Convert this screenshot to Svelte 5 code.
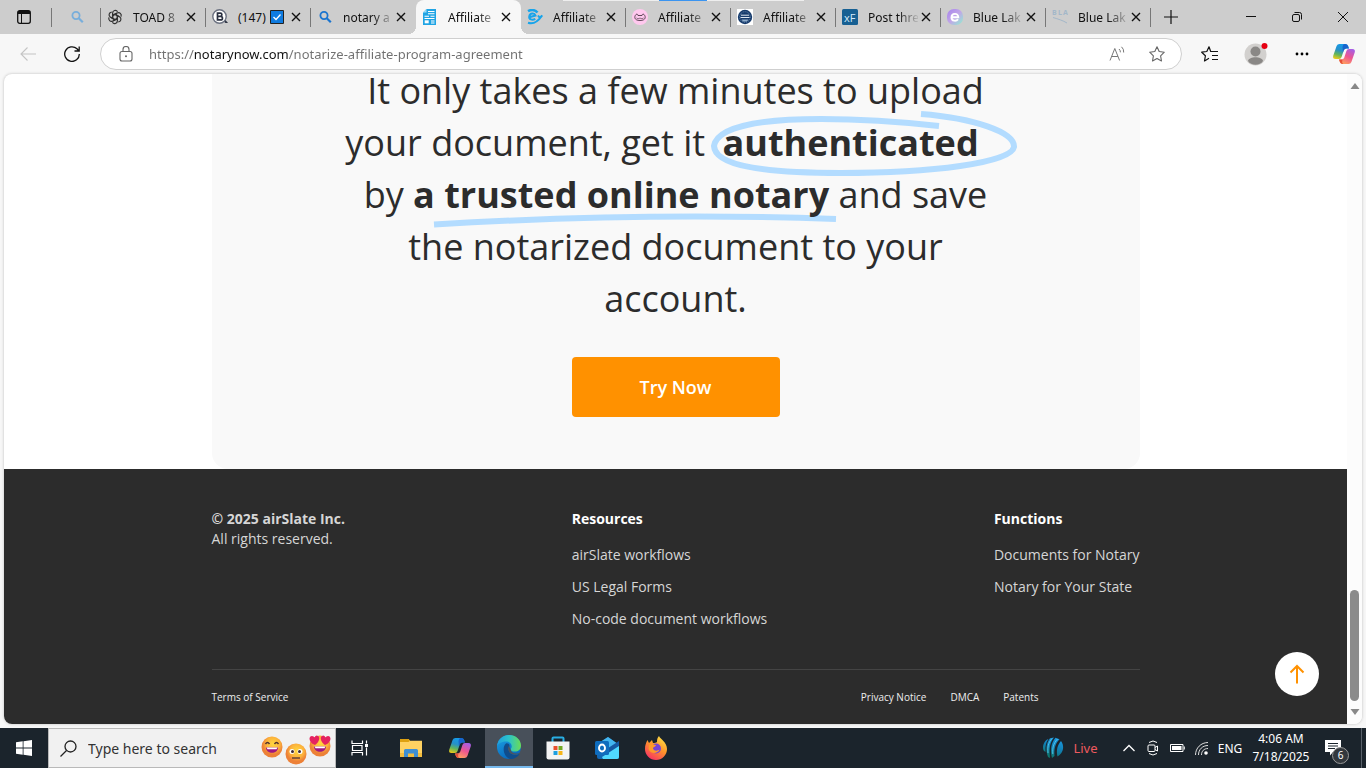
<script lang="ts">
    const tabs = [
        { icon: 'gpt', title: 'TOAD 8' },
        { icon: 'bq', title: '(147)', checked: true },
        { icon: 'search', title: 'notary a' },
        { icon: 'doc', title: 'Affiliate', active: true },
        { icon: 'swirl', title: 'Affiliate' },
        { icon: 'pink', title: 'Affiliate' },
        { icon: 'seal', title: 'Affiliate' },
        { icon: 'xf', title: 'Post thre' },
        { icon: 'e', title: 'Blue Lak' },
        { icon: 'bla', title: 'Blue Lak' },
    ]

    const resources = ['airSlate workflows', 'US Legal Forms', 'No-code document workflows']
    const functions = ['Documents for Notary', 'Notary for Your State']
    const legal = ['Privacy Notice', 'DMCA', 'Patents']

    let url = $state('https://notarynow.com/notarize-affiliate-program-agreement')
    let query = $state('')
</script>

{#snippet favicon(name: string)}
    <svg class="favicon" viewBox="0 0 16 16" width="16" height="16" aria-hidden="true">
        {#if name === 'gpt'}
            <g fill="none" stroke="#333" stroke-width="1.200">
                {#each [0, 60, 120, 180, 240, 300] as angle}
                    <path d="M5.600 9.400V4.200a2.700 2.700 0 0 1 5-1.500M5.600 6.600 8 5.200l4.300 2.500" transform="rotate({angle} 8 8)" />
                {/each}
            </g>
        {:else if name === 'bq'}
            <path d="m10.500 11.500 3 2.500H16l-2.500-3z" fill="#2f3545" />
            <circle cx="7.500" cy="7.500" r="6.700" fill="#fff" stroke="#6b7180" stroke-width="1.400" />
            <path d="M5.500 4.200h2.800a1.500 1.500 0 0 1 0 3.200H5.500zM5.500 7.400h3.200a1.700 1.700 0 0 1 0 3.500H5.500z" fill="none" stroke="#2a3040" stroke-width="1.700" />
        {:else if name === 'search' || name === 'search-pale'}
            <g fill="none" stroke={name === 'search' ? '#1a74cf' : '#78aedb'} stroke-width="1.800">
                <circle cx="7" cy="6.500" r="3.600" />
                <path d="m9.800 9.300 4 4" stroke-width="2.200" />
            </g>
        {:else if name === 'doc'}
            <path d="M4.500 0H14v16H1V3.500z" fill="#20a4e4" />
            <path d="M4.500 0v3.500H1z" fill="#9bdcf7" />
            <path d="M6 2.500h6.500M6 4.800h6.500M2.500 7.200h4.500M8.500 7.200h4M2.500 9.500h10M9 12h3.500M9 14h3.500" stroke="#fff" stroke-width="1.100" />
            <path d="M2.700 11.300h4v3h-4z" fill="#fff" />
        {:else if name === 'swirl'}
            <g fill="none" stroke="#18a4ea" stroke-width="2">
                <path d="M1 2.200C4 .4 8 .6 10.500 3.500" stroke-width="2.600" />
                <path d="M2.200 8.200 8.500 6.500C7.500 3.600 3 4 2.300 7.200c-.7 3.300 3 4.300 6 2.600" />
                <path d="M1 13.800C6 15.500 11 12.500 15 6.800M11 6.500l1.500 2 3-2" />
            </g>
        {:else if name === 'pink'}
            <circle cx="8" cy="8" r="8" fill="#ffc8ee" />
            <path d="M4 5.500c-2 2-2 6 4 6s6-4 4-6c-1.200-1-2 .2-2 1H6c0-.8-.800-2-2-1z" fill="none" stroke="#4f3948" stroke-width=".9" />
            <path d="M4.500 9c1 .8 2.500.8 3.500 0 1 .8 2.500.8 3.500 0" fill="none" stroke="#4f3948" stroke-width=".7" />
        {:else if name === 'seal'}
            <path d="M0 0h16v16H0z" fill="#fff" />
            <circle cx="8" cy="8" r="7.200" fill="#173b6b" />
            <circle cx="8" cy="8" r="5.300" fill="none" stroke="#6b8db4" stroke-dasharray="1 1" />
            <path d="M4 6.200h8M3.500 8.500h9" stroke="#dfe8f2" />
            <path d="M4.500 10.500h7l-1.500 2H6z" fill="#8eabc9" />
        {:else if name === 'xf'}
            <rect width="16" height="16" rx="1.500" fill="#176093" />
            <text x="2" y="12.500" font-family="Open Sans" font-size="11" fill="#d5eafa">xF</text>
        {:else if name === 'e'}
            <defs>
                <linearGradient id="e-fill" x1="0" y1="0" x2="1" y2="1">
                    <stop offset="0" stop-color="#a783ed" /><stop offset=".5" stop-color="#c1a6e8" /><stop offset="1" stop-color="#8ff0cf" />
                </linearGradient>
            </defs>
            <rect width="16" height="16" rx="7" fill="url(#e-fill)" />
            <path d="M4.800 8.200h6.500c0-4.700-6.800-4.300-6.800.2 0 4 5 4 6.500 1.800" fill="none" stroke="#fff" stroke-width="1.900" />
        {:else}
            <g font-family="Open Sans" font-size="7" font-weight="700" fill="#a3b7c9">
                <text x="0" y="6">B</text><text x="6" y="6">L</text><text x="11" y="6">A</text>
            </g>
            <path d="M1 8.500c5 1.500 10 3 14 5.500" fill="none" stroke="#a3b7c9" />
        {/if}
    </svg>
{/snippet}

{#snippet cross()}
    <svg viewBox="0 0 10 10" width="10" height="10" aria-hidden="true"><path d="m1 1 8 8M9 1 1 9" stroke="#111" stroke-width="1.400" /></svg>
{/snippet}

{#snippet copilot(id: string)}
    <svg viewBox="0 0 24 24" width="24" height="24" aria-hidden="true">
        <defs>
            <linearGradient id="{id}-a" x1=".5" y1="0" x2=".2" y2="1">
                <stop offset="0" stop-color="#159be9" /><stop offset=".4" stop-color="#2690c9" /><stop offset=".7" stop-color="#63b55a" /><stop offset="1" stop-color="#f0cb18" />
            </linearGradient>
            <linearGradient id="{id}-b" x1=".8" y1="0" x2=".3" y2="1">
                <stop offset="0" stop-color="#a45ee8" /><stop offset=".5" stop-color="#ed5590" /><stop offset="1" stop-color="#ffa15e" />
            </linearGradient>
        </defs>
        <path d="M17 6.500 16 3.700Q15.300 2 13.500 2H7.500Q5.300 2 4.600 4L1.300 13.500Q.3 17 3.600 17H7q2 0 2.600-2l2.200-6.700Q12.500 6.500 14.500 6.500z" fill="url(#{id}-a)" />
        <path d="M12.500 2h1q1.800 0 2.500 1.700l1 2.800h-2.500q-2 0-2.700 1.800L11 10.500 10.500 5Q10.800 2 12.500 2z" fill="#1753c6" opacity=".75" />
        <path d="m7 17.500 1 2.800Q8.700 22 10.500 22h6q2.200 0 2.900-2l3.300-9.500Q23.700 7 20.400 7H17q-2 0-2.600 2l-2.200 6.700q-.7 1.800-2.700 1.800z" fill="url(#{id}-b)" />
        <path d="m7 17.500 1 2.800Q8.700 22 10.500 22h1q-2-.5-1-4.500z" fill="#e54e37" />
    </svg>
{/snippet}

{#snippet face(kind: string)}
    <svg class="face {kind}" viewBox="0 0 22 22" width="22" height="22" aria-hidden="true">
        <defs>
            <radialGradient id="face-{kind}" cx=".55" cy=".35">
                <stop offset="0" stop-color="#ffd83f" /><stop offset=".65" stop-color="#fcb23c" /><stop offset="1" stop-color="#ed8137" />
            </radialGradient>
        </defs>
        <circle cx="11" cy="11" r="10.500" fill="url(#face-{kind})" />
        {#if kind === 'flat'}
            <circle cx="7" cy="8.500" r="2.500" fill="#fff" /><circle cx="15" cy="8.500" r="2.500" fill="#fff" />
            <circle cx="7.500" cy="8.500" r="1.500" fill="#402b38" /><circle cx="14.500" cy="8.500" r="1.500" fill="#402b38" />
            <path d="M7 15h8" stroke="#5b3a38" stroke-width="1.400" />
        {:else}
            <path d="M5 11.500h12c0 7-12 7-12 0z" fill="#a01780" />
            <path d="M5.500 11.500h11l-1 1.800h-9z" fill="#fff" />
            {#if kind === 'grin'}
                <path d="M4.500 8q2-3 4 0M13.500 8q2-3 4 0" fill="none" stroke="#50302e" stroke-width="1.400" />
            {:else}
                <path d="M6 10C-1 7-.5 1 3 1q2 0 2.500 1.500Q7-.5 9 1c3 2 0 7-3 9zM16 10c7-3 6.500-9 3-9q-2 0-2.500 1.500Q15-.5 13 1c-3 2 0 7 3 9z" fill="#e52260" />
            {/if}
        {/if}
    </svg>
{/snippet}

<div class="screen">
    <header class="tab-strip">
        <div class="loading-line"><span></span></div>
        <button class="tab-menu" aria-label="Tab actions menu">
            <svg viewBox="0 0 14 14" width="14" height="14"><rect x=".7" y=".7" width="12.600" height="12.600" rx="2" fill="none" stroke="#111" stroke-width="1.300" /><path d="M1 1h12v3H1z" fill="#111" /><path d="M4.500 4v9" stroke="#111" /></svg>
        </button>
        <button class="pinned" aria-label="Search">{@render favicon('search-pale')}</button>
        {#each tabs as tab}
            <div class="tab" class:active={tab.active}>
                {@render favicon(tab.icon)}
                <button class="title">
                    <span>{tab.title}</span>
                    {#if tab.checked}
                        <svg viewBox="0 0 14 14" width="14" height="14"><path d="M.5.5h13v13H.5z" fill="#0f7be0" stroke="#222" /><path d="m3.500 7 2.500 2.500 4.500-5" fill="none" stroke="#fff" stroke-width="1.300" /></svg>
                    {/if}
                </button>
                <button class="close" aria-label="Close tab">{@render cross()}</button>
            </div>
        {/each}
        <button class="new-tab" aria-label="New tab">
            <svg viewBox="0 0 14 14" width="14" height="14"><path d="M7 0v14M0 7h14" stroke="#111" stroke-width="1.200" /></svg>
        </button>
        <div class="window-controls">
            <button aria-label="Minimize"><svg viewBox="0 0 10 10" width="10" height="10"><path d="M0 4.500h10" stroke="#111" /></svg></button>
            <button aria-label="Restore"><svg viewBox="0 0 10 10" width="10" height="10"><g fill="none" stroke="#111"><rect x=".5" y="2.500" width="7" height="7" rx="1.500" /><path d="M2.500.5h5a2 2 0 0 1 2 2v5" /></g></svg></button>
            <button aria-label="Close window"><svg viewBox="0 0 10 10" width="10" height="10"><path d="m0 0 10 10M10 0 0 10" stroke="#111" /></svg></button>
        </div>
    </header>

    <div class="toolbar">
        <button class="back" aria-label="Back" disabled>
            <svg viewBox="0 0 16 14" width="16" height="14"><path d="M16 7H1M7.500.5 1 7l6.500 6.500" fill="none" stroke="#c4c4c4" stroke-width="1.100" /></svg>
        </button>
        <button class="reload" aria-label="Refresh">
            <svg viewBox="0 0 16 16" width="16" height="16"><path d="M15.300 8A7.300 7.300 0 1 1 13 2.800L15 5M15.200.5V5h-4.700" fill="none" stroke="#111" stroke-width="1.300" /></svg>
        </button>
        <div class="address">
            <svg class="lock" viewBox="0 0 14 16" width="14" height="16" aria-hidden="true"><g fill="none" stroke="#666" stroke-width="1.100"><rect x="1" y="5.500" width="12" height="9.500" rx="2" /><path d="M4 5.500V3.500a3 3 0 0 1 6 0v2" /></g><circle cx="7" cy="10.200" r="1" fill="#666" /></svg>
            <input type="text" bind:value={url} aria-label="Address" spellcheck="false" />
            <button aria-label="Read aloud">
                <svg viewBox="0 0 16 16" width="16" height="16"><path d="M1 14.500 5.800 2.500l4.800 12M2.700 10.500h6.200M10 3q1.500 1.300 1.400 3.300M12.500.8q2.500 2.200 2.200 5.700" fill="none" stroke="#777" /></svg>
            </button>
            <button aria-label="Add to favorites">
                <svg viewBox="0 0 16 16" width="16" height="16"><path d="m8 .8 2.200 4.700 5.100.7-3.700 3.600.9 5.200L8 12.500 3.500 15l.9-5.200L.7 6.200l5.100-.7z" fill="none" stroke="#666" stroke-width="1.100" stroke-linejoin="round" /></svg>
            </button>
        </div>
        <div class="actions">
            <button aria-label="Favorites">
                <svg viewBox="0 0 18 16" width="18" height="16"><path d="M11 5.500H9.700L8 .8 5.800 5.500l-5.100.7 3.700 3.600-.9 5.200L8 12.300M11 5.500h6M11 9.500h6M11 13.500h6" fill="none" stroke="#111" stroke-width="1.200" stroke-linejoin="round" /></svg>
            </button>
            <button aria-label="Profile">
                <svg viewBox="0 0 24 24" width="24" height="24"><circle cx="11.500" cy="12.500" r="11" fill="#d2d0ce" /><circle cx="11.500" cy="9.500" r="5" fill="#8a8886" /><path d="M4 19c1-5 14-5 15 0-3 5-12 5-15 0z" fill="#8a8886" /><circle cx="20.500" cy="4" r="3" fill="#e60012" /></svg>
            </button>
            <button aria-label="Settings and more">
                <svg viewBox="0 0 14 4" width="14" height="4"><circle cx="2" cy="2" r="1.400" /><circle cx="7" cy="2" r="1.400" /><circle cx="12" cy="2" r="1.400" /></svg>
            </button>
            <button aria-label="Copilot">{@render copilot('bar')}</button>
        </div>
    </div>

    <div class="viewport">
        <div class="page">
            <main class="hero">
                <p>
                    It only takes a few minutes to upload your document, get it
                    <strong class="circled">authenticated<svg viewBox="708 108 312 70" width="312" height="70" aria-hidden="true"><path d="M920 114C972 118 1014 132 1013 147 1010 163 930 173 840 173 760 173 714 165 713 146 716 126 762 119 820 119 860 119 902 122 938 126" /></svg></strong>
                    by
                    <strong class="underlined">a trusted online notary<svg viewBox="430 210 410 18" width="410" height="18" aria-hidden="true"><path d="M434 224.500C560 217 700 214 836 219" /></svg></strong>
                    and save the notarized document to your account.
                </p>
                <button class="try">Try Now</button>
            </main>
            <footer>
                <div class="inner">
                    <div class="columns">
                        <div class="rights"><strong>© 2025 airSlate Inc.</strong><span>All rights reserved.</span></div>
                        <nav aria-label="Resources">
                            <h2>Resources</h2>
                            {#each resources as item}<a href="#resources">{item}</a>{/each}
                        </nav>
                        <nav aria-label="Functions">
                            <h2>Functions</h2>
                            {#each functions as item}<a href="#functions">{item}</a>{/each}
                        </nav>
                    </div>
                    <div class="legal">
                        <a href="#terms">Terms of Service</a>
                        <div>{#each legal as item}<a href="#legal">{item}</a>{/each}</div>
                    </div>
                </div>
            </footer>
            <button class="to-top" aria-label="Back to top">
                <svg viewBox="0 0 16 20" width="16" height="20"><path d="M8 19.500V2M1.500 8.500 8 2l6.500 6.500" fill="none" stroke="#ff9100" stroke-width="2" /></svg>
            </button>
        </div>
        <div class="scrollbar" aria-hidden="true">
            <svg viewBox="0 0 10 6" width="10" height="6"><path d="M5 0 9.500 6h-9z" fill="#888" /></svg>
            <span></span>
            <svg viewBox="0 0 10 6" width="10" height="6"><path d="M5 6 9.500 0h-9z" fill="#888" /></svg>
        </div>
    </div>

    <div class="taskbar">
        <button class="start" aria-label="Start">
            <svg viewBox="0 0 16 16" width="16" height="16"><path d="m0 2.200 6.700-.9v6.300H0zM7.500 1.200 16 0v7.600H7.500zM0 8.400h6.700v6.300L0 13.800zM7.500 8.400H16V16l-8.500-1.200z" fill="#fff" /></svg>
        </button>
        <label class="search">
            <svg viewBox="0 0 17 17" width="17" height="17" aria-hidden="true"><circle cx="10.500" cy="6.500" r="5.500" fill="none" stroke="#222" stroke-width="1.300" /><path d="m6.500 10.500-6 6" stroke="#222" stroke-width="1.300" /></svg>
            <input type="text" bind:value={query} placeholder="Type here to search" aria-label="Type here to search" />
            {@render face('grin')}
            {@render face('flat')}
            {@render face('love')}
        </label>
        <div class="apps">
            <button class="task-view" aria-label="Task View">
                <svg viewBox="0 0 18 16" width="18" height="16"><g fill="none" stroke="#fff" stroke-width="1.200"><path d="M1 .5v3h10.500v-3M1 15.500v-3h10.500v3M1.500 5.500h9.500v5H1.500zM15.500.5v3M15.500 7.500v8" /></g><path d="M14 4h3v3h-3z" fill="#fff" /></svg>
            </button>
            <button aria-label="File Explorer">
                <svg viewBox="0 0 22 20" width="22" height="20"><path d="M0 1h8.500L10 2.800H22V19H0z" fill="#ffd262" /><path d="M0 1h8.500L10 2.800 8.500 4H0z" fill="#dea111" /><path d="M0 15h22v4H0z" fill="#f3bd3f" /><path d="M4 19v-6.500q0-1.500 1.500-1.500h11q1.500 0 1.500 1.500V19h-4v-3.500H8V19z" fill="#3f8fd2" /></svg>
            </button>
            <button aria-label="Copilot">{@render copilot('task')}</button>
            <button class="current" aria-label="Microsoft Edge">
                <svg viewBox="0 0 24 24" width="24" height="24">
                    <defs>
                        <linearGradient id="edge-top"><stop offset="0" stop-color="#1f9ee0" /><stop offset=".5" stop-color="#2cc3c8" /><stop offset="1" stop-color="#6bdc55" /></linearGradient>
                        <linearGradient id="edge-low" x1="0" y1="0" x2=".5" y2="1"><stop offset="0" stop-color="#1ca4e4" /><stop offset="1" stop-color="#0968bd" /></linearGradient>
                    </defs>
                    <circle cx="12" cy="12" r="12" fill="url(#edge-low)" />
                    <path d="M0 11C1 4 6 0 12 0c7 0 12 5 12 10.500 0 4-3 6-6 6-3.500 0-5-1.500-4-3 2-3-.5-7-5-7-5 0-8 2.500-9 4.500z" fill="url(#edge-top)" />
                    <path d="M9 8.500c-4 3-3 13 4 15.400 4 .2 8-2 9.500-5-3 1.500-10 1.500-11-4.500-.2-2 1-2.500 1-4C12.300 9 10.500 8 9 8.500z" fill="#104d8c" />
                    <path d="M12 11c-1 .8-1 2-.8 3.300 1 6 8 6.200 11.500 4.200q.8-.8-.3-.6c-4 1.500-8.400 0-8.500-3z" fill="#4b545f" />
                </svg>
            </button>
            <button aria-label="Microsoft Store">
                <svg viewBox="0 0 24 24" width="24" height="24"><path d="M6.500 6V2.500q0-1 1-1h9q1 0 1 1V6" fill="none" stroke="#28aee4" stroke-width="2" /><path d="M.5 5.500h23v16q0 2-2 2h-19q-2 0-2-2z" fill="#f3f3f3" /><path d="M7.500 10h4v4h-4z" fill="#e8502d" /><path d="M12.500 10h4v4h-4z" fill="#73aa24" /><path d="M7.500 15h4v4h-4z" fill="#1d9fe0" /><path d="M12.500 15h4v4h-4z" fill="#f7b517" /></svg>
            </button>
            <button aria-label="Outlook">
                <svg viewBox="0 0 24 24" width="24" height="24"><path d="m2 9 11-8 11 8v12q0 2-2 2H4q-2 0-2-2z" fill="#1267b4" /><path d="m5 6 8-5 10 7-9 8-9-6z" fill="#43b5ef" /><path d="m10 14 14-9v16l-2 2H8z" fill="#1558a2" /><path d="m24 10-17 11 1 2h14q2 0 2-2z" fill="#50d9ff" /><rect y="5" width="14" height="14" rx="1.500" fill="#0f6cbd" /><ellipse cx="7" cy="12" rx="3" ry="3.500" fill="none" stroke="#fff" stroke-width="1.900" /></svg>
            </button>
            <button aria-label="Firefox">
                <svg viewBox="0 0 24 24" width="24" height="24">
                    <defs><linearGradient id="fox" x1=".8" y1="0" x2=".2" y2="1"><stop offset="0" stop-color="#ffe348" /><stop offset=".45" stop-color="#ff9629" /><stop offset="1" stop-color="#f72b68" /></linearGradient></defs>
                    <path d="M15 0c1 3 8 6 8 13a11 11 0 0 1-22 0C1 9 2 7 3.500 4l1.500 3 3-3 1 3c2 0 3-.3 4-1 0-3 .5-4.500 2-6z" fill="url(#fox)" />
                    <circle cx="12" cy="12.500" r="5" fill="#7743d5" />
                    <path d="M5 9c3-2.500 5 0 7 0-.5 2-3 2-3 3.500 1 3 5 2.500 6.500 1-1 4-9 5.500-11-.5z" fill="#ff9a2a" />
                </svg>
            </button>
        </div>
        <div class="tray">
            <button class="live">
                <svg viewBox="0 0 22 22" width="22" height="22" aria-hidden="true">
                    <defs><linearGradient id="ball" x1=".8" y1="0" x2=".4" y2="1"><stop offset="0" stop-color="#1c9be6" /><stop offset=".5" stop-color="#1180b4" /><stop offset="1" stop-color="#0e7769" /></linearGradient></defs>
                    <path d="M1 11C1 7 3 3 6.500 2 4 5 3 9 3.500 15 2 14 1 13 1 11zM8 1.200l4-.6C8 5 7 11 8 21l-2-1C3.500 13 4 6 8 1.200zM13.500.8l4 1.500C13 7 12 12 12.500 19l-2.500 2C8 13 9 6 13.500.800zM19 4q2.500 3 2 8-1 5-5.500 7.500C14 13 15.500 8 19 4z" fill="url(#ball)" />
                    <path d="M10 1.500C6 6 5.500 10 6 16M15.500 2C11 7 10.500 11 10.800 17" fill="none" stroke="#55c8ee" stroke-width=".9" />
                </svg>
                <span>Live</span>
            </button>
            <button aria-label="Show hidden icons"><svg viewBox="0 0 12 8" width="12" height="8"><path d="m.5 7 5.500-5.500L11.500 7" fill="none" stroke="#fff" stroke-width="1.300" /></svg></button>
            <button aria-label="Meet Now"><svg viewBox="0 0 12 16" width="12" height="16"><g fill="none" stroke="#fff"><rect x="1" y="5" width="7" height="6.500" rx="1" /><path d="m8 7.500 2.500-1.500v5L8 9.500M2 2.500q4-3 8 0M2 13.500q4 3 8 0" /></g></svg></button>
            <button aria-label="Battery"><svg viewBox="0 0 15 10" width="15" height="10"><path d="M.5 1.500h12.500v7H.5zM14.300 3.500v3" fill="none" stroke="#fff" /><path d="M2 3h9.500v4H2z" fill="#fff" /></svg></button>
            <button aria-label="Network"><svg viewBox="0 0 13 13" width="13" height="13"><g fill="none" stroke="#ddd"><path d="M.5 13C.5 6 6 .5 13 .5M3.500 13c0-5.500 4-9.500 9.500-9.500M6.500 13C6.500 9 9 6.500 13 6.500" /></g><circle cx="11" cy="11" r="1.800" fill="#fff" /></svg></button>
            <button class="lang">ENG</button>
            <button class="clock"><span>4:06 AM</span><span>7/18/2025</span></button>
            <button class="notices" aria-label="Notifications">
                <svg viewBox="0 0 16 16" width="16" height="16"><path d="M0 0h16v12H8l-3 3.500V12H0z" fill="#fff" /><path d="M3 3.500h10M3 6h10M3 8.500h7" stroke="#1b242c" /></svg>
                <span>6</span>
            </button>
        </div>
    </div>
</div>

<style>
    :global(body) {
        margin: 0;
        overflow: hidden;
    }

    .screen {
        display: flex;
        flex-direction: column;
        height: 100vh;
        background: #f7f7f7;
        font-family: "Open Sans", sans-serif;
        color: #111;
    }

    .screen * {
        box-sizing: border-box;
    }

    button {
        display: flex;
        flex: none;
        align-items: center;
        justify-content: center;
        padding: 0;
        border: 0;
        background: none;
        font: inherit;
        color: inherit;
    }

    input {
        min-width: 0;
        padding: 0;
        border: 0;
        outline: 0;
        background: none;
        font: inherit;
    }

    svg {
        display: block;
        flex: none;
    }

    a {
        color: inherit;
        text-decoration: none;
    }

    /* tab strip */
    .tab-strip {
        position: relative;
        display: flex;
        flex: none;
        height: 34px;
        background: #cdcdcd;
        font-family: "Noto Sans", sans-serif;
        font-size: 12px;
    }

    .loading-line {
        position: absolute;
        top: 0;
        left: 563px;
        z-index: 2;
        width: 241px;
        height: 1px;
        padding: 0 97px 0 96px;
        background: #eee;
    }

    .loading-line span {
        display: block;
        height: 1px;
        background: #3b94f0;
    }

    .tab-menu {
        width: 52px;
        padding-right: 4px;
    }

    .pinned {
        width: 49px;
    }

    .tab-menu,
    .pinned,
    .tab {
        background: linear-gradient(#777, #777) right 8px / 1px 19px no-repeat;
    }

    .tab {
        position: relative;
        display: flex;
        flex: 0 1 105px;
        align-items: center;
        min-width: 0;
        padding: 0 8px 0 6px;
    }

    .tab.active,
    .tab:has(+ .active) {
        background: none;
    }

    .tab.active {
        border-radius: 8px 8px 0 0;
        background: #f7f7f7;
    }

    .tab.active::before,
    .tab.active::after {
        content: '';
        position: absolute;
        bottom: 0;
        width: 8px;
        height: 8px;
    }

    .tab.active::before {
        right: 100%;
        background: radial-gradient(circle at 0 0, #cdcdcd 8px, #f7f7f7 8px);
    }

    .tab.active::after {
        left: 100%;
        background: radial-gradient(circle at 100% 0, #cdcdcd 8px, #f7f7f7 8px);
    }

    .title {
        flex: 1;
        gap: 4px;
        justify-content: flex-start;
        min-width: 0;
        margin: 0 1px 0 10px;
        white-space: nowrap;
        mask-image: linear-gradient(90deg, #000 30px, transparent 52px);
    }

    .title:has(svg) {
        mask-image: none;
    }

    .close {
        width: 14px;
        height: 14px;
    }

    .new-tab {
        width: 40px;
    }

    .window-controls {
        display: flex;
        margin-left: auto;
    }

    .window-controls button {
        width: 46px;
    }

    /* toolbar */
    .toolbar {
        display: flex;
        flex: none;
        align-items: center;
        height: 40px;
        padding-right: 10px;
    }

    .back {
        width: 44px;
        padding-left: 12px;
    }

    .reload {
        width: 56px;
    }

    .address {
        display: flex;
        flex: 1;
        align-items: center;
        gap: 8px;
        height: 32px;
        padding: 0 12px 0 18px;
        border: 1px solid #cfcfcf;
        border-radius: 16px;
        background: #fff;
    }

    .address input {
        flex: 1;
        margin-left: 8px;
        font-family: "Noto Sans", sans-serif;
        font-size: 13px;
        color: transparent;
        caret-color: #111;
        background: linear-gradient(90deg, #707070 45px, #111 45px 140px, #707070 140px);
        background-clip: text;
    }

    .address button {
        width: 24px;
        margin-left: 8px;
    }

    .actions {
        display: flex;
        align-items: center;
    }

    .actions button {
        width: 46px;
    }

    .actions button:first-child {
        width: 51px;
        padding-left: 5px;
    }

    .actions button:last-child {
        width: 24px;
        margin-left: 7px;
    }

    /* page */
    .viewport {
        display: flex;
        flex: 1;
        min-height: 0;
        margin: 0 4px 4px;
        overflow: hidden;
        border-radius: 8px;
        background: #fff;
        box-shadow: 0 0 3px #bbb;
    }

    .page {
        position: relative;
        display: flex;
        flex: 1;
        flex-direction: column;
        justify-content: flex-end;
        min-width: 0;
    }

    .hero {
        display: flex;
        flex-direction: column;
        align-items: center;
        width: 928px;
        max-width: 100%;
        margin: 0 auto;
        padding: 60px 0 52px;
        border-radius: 16px;
        background: #f9f9f9;
        color: #2c2c2c;
    }

    .hero p {
        position: relative;
        z-index: 0;
        max-width: 680px;
        margin: 0 0 32px;
        font-size: 36px;
        line-height: 52px;
        text-align: center;
    }

    .hero strong {
        position: relative;
        display: inline-block;
    }

    .hero p svg {
        position: absolute;
        z-index: -1;
        fill: none;
        stroke: #b3dcff;
        stroke-width: 6px;
    }

    .circled {
        padding: 0 27px 0 8px;
    }

    .circled svg {
        top: -9px;
        left: -6px;
    }

    .underlined svg {
        top: 41px;
        left: 17px;
    }

    .try {
        width: 208px;
        height: 60px;
        border-radius: 4px;
        background: #ff9100;
        color: #fff;
        font-size: 18px;
        font-weight: 600;
    }

    footer {
        background: #2c2c2c;
        color: #d6d6d6;
        font-size: 14px;
        line-height: 20px;
    }

    .inner {
        width: 928px;
        max-width: 100%;
        margin: 0 auto;
    }

    .columns {
        display: flex;
        justify-content: space-between;
        padding: 40px 0;
        border-bottom: 1px solid #444;
    }

    .rights {
        display: flex;
        flex-direction: column;
    }

    nav {
        display: flex;
        flex-direction: column;
        gap: 12px;
    }

    h2 {
        margin: 0 0 4px;
        color: #fff;
        font-size: 14px;
    }

    .legal {
        display: flex;
        justify-content: space-between;
        padding: 17px 101px 17px 0;
        font-size: 10px;
        color: #eee;
    }

    .legal div {
        display: flex;
        gap: 24px;
    }

    .to-top {
        position: absolute;
        right: 28px;
        bottom: 28px;
        width: 44px;
        height: 44px;
        border-radius: 50%;
        background: #fff;
    }

    .scrollbar {
        display: flex;
        flex: none;
        flex-direction: column;
        align-items: center;
        width: 15px;
        padding: 9px 0;
        background: #fcfcfc;
    }

    .scrollbar span {
        width: 9px;
        height: 111px;
        margin: auto 0 8px;
        border-radius: 5px;
        background: #8b8b8b;
    }

    /* taskbar */
    .taskbar {
        display: flex;
        flex: none;
        height: 40px;
        background: #1b242c;
        color: #fff;
        font-family: "Noto Sans", sans-serif;
        font-size: 12px;
    }

    .start {
        width: 48px;
    }

    .search {
        display: flex;
        align-items: center;
        width: 288px;
        padding: 0 4px 0 11px;
        border: 1px solid #b9b9b9;
        background: #f1f1f1;
    }

    .search input {
        flex: 1;
        margin-left: 11px;
        font-size: 14px;
    }

    .search input::placeholder {
        color: #333;
        opacity: 1;
    }

    .face {
        margin-left: 2px;
        align-self: center;
        margin-bottom: 2px;
    }

    .face.flat {
        align-self: flex-end;
    }

    .face.love {
        align-self: flex-start;
        margin-top: 6px;
    }

    .apps {
        display: flex;
        gap: 1px;
    }

    .apps button {
        width: 48px;
    }

    .apps .task-view {
        margin-right: 2px;
    }

    .apps .current {
        border-bottom: 2px solid #76b9ed;
        background: #48505a;
    }

    .tray {
        display: flex;
        margin-left: auto;
        padding-right: 4px;
    }

    .tray button {
        width: 24px;
    }

    .tray .live {
        gap: 9px;
        width: 64px;
        margin-right: 15px;
        color: #ee5a5f;
        font-size: 13px;
    }

    .tray .lang {
        width: 34px;
    }

    .tray .clock {
        flex-direction: column;
        width: 68px;
        line-height: 18px;
    }

    .tray .notices {
        position: relative;
        width: 47px;
        border-right: 1px solid #59616a;
        padding-right: 10px;
    }

    .notices span {
        position: absolute;
        right: 12px;
        bottom: 4px;
        width: 17px;
        height: 17px;
        border: 1px solid #999;
        border-radius: 50%;
        background: #33383d;
        font-size: 10px;
        line-height: 15px;
        text-align: center;
    }
</style>
